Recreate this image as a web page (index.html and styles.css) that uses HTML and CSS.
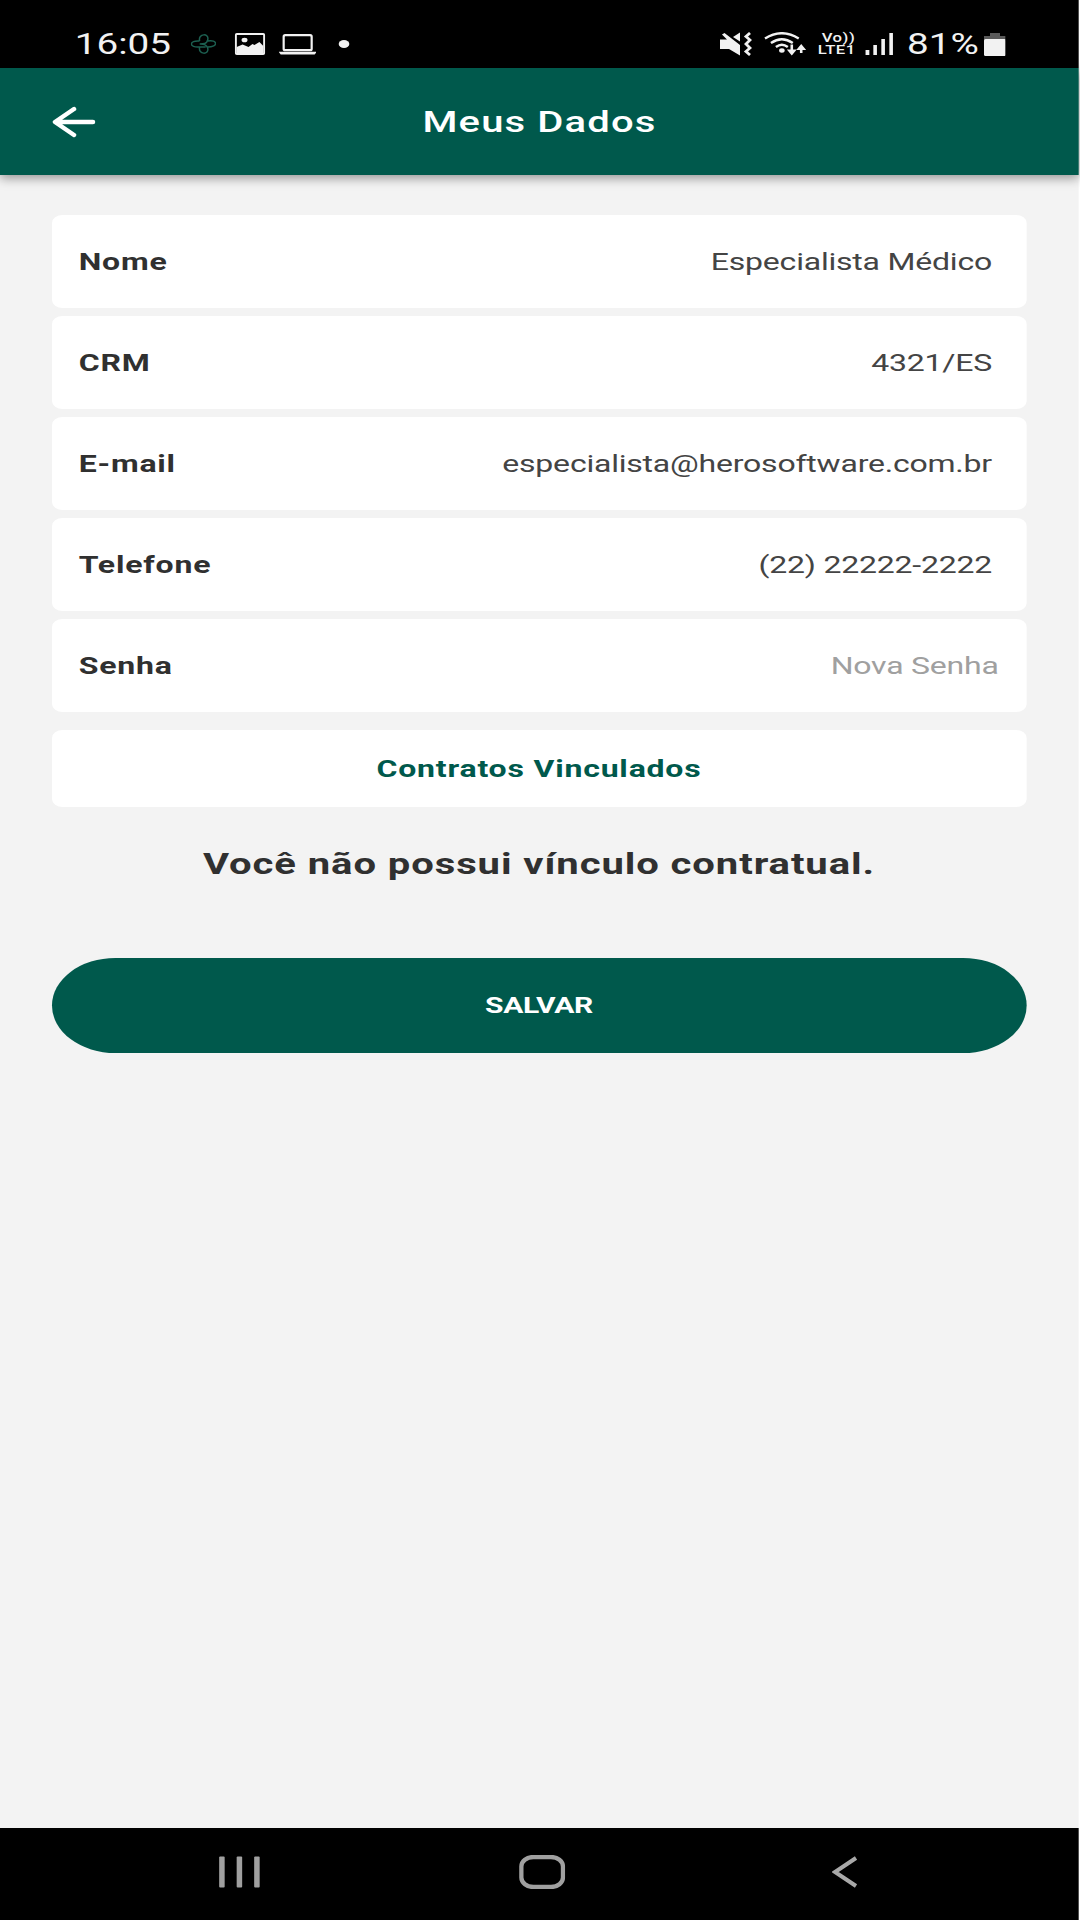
FILE: index.html
```html
<!DOCTYPE html>
<html lang="pt-BR">
<head>
    <meta charset="UTF-8">
    <meta name="viewport" content="width=device-width, initial-scale=1.0">
    <title>Meus Dados</title>
    <link rel="stylesheet" href="styles.css">
</head>
<body>
    <div class="screen">
        <div class="status-bar">
            <div class="status-left">
                <span class="time">16:05</span>
                <svg class="icon-app" viewBox="0 0 26 20" preserveAspectRatio="none" fill="none" stroke="#1c5f50" stroke-width="1.5">
                    <path d="M9 7C7 -1 19 -1 17 6C16 10 13 10 9 10M17 7C27 5 28 13 17 13M9 7C-2 6 -2 14 9 13H15M9 13C7 21 19 21 17 14C16 11 13 10 10 10"/>
                </svg>
                <svg class="icon-picture" viewBox="0 0 31 22" preserveAspectRatio="none">
                    <rect x="1.2" y="1" width="28.6" height="20" rx="1" fill="none" stroke="#f2f2f2" stroke-width="2"/>
                    <path d="M2 14L8 11.5L14 14L18 11L20 12L25 9L29 13V21H2Z" fill="#f2f2f2"/>
                    <ellipse cx="10" cy="7" rx="3" ry="2.3" fill="#f2f2f2"/>
                </svg>
                <svg class="icon-laptop" viewBox="0 0 38 21" preserveAspectRatio="none">
                    <rect x="5" y="1.2" width="28" height="15" rx="1.5" fill="none" stroke="#f2f2f2" stroke-width="2.2"/>
                    <path d="M0 17.8H38L36 20.6H2Z" fill="#f2f2f2"/>
                </svg>
                <span class="dot"></span>
            </div>
            <div class="status-right">
                <svg class="icon-mute" viewBox="0 0 32 24" preserveAspectRatio="none" fill="#f2f2f2">
                    <path d="M0 7.5H7L2 2.500L4.500 1L20 13V23.500L9 17H0Z"/>
                    <path d="M13 5L20 0.5V9.5Z"/>
                    <path d="M30 1L26 4.5L30 8L26 12L30 16L26 19.5L30 23" fill="none" stroke="#f2f2f2" stroke-width="2.8"/>
                </svg>
                <svg class="icon-wifi" viewBox="0 0 43 24" preserveAspectRatio="none" fill="none" stroke="#f2f2f2" stroke-width="2.5">
                    <path d="M1 6.5Q18 -4 35 6.5"/>
                    <path d="M7 11Q18 3.5 29 11"/>
                    <path d="M12 15Q18 10.5 24 15"/>
                    <ellipse cx="18" cy="18.5" rx="2.8" ry="2.2" fill="#f2f2f2" stroke="none"/>
                    <path d="M28 12.500V20M37.500 21V16" stroke-width="2.600"/>
                    <path d="M23 17.500H33L28 23.500ZM32.500 18H42.500L37.500 12Z" fill="#f2f2f2" stroke="none"/>
                </svg>
                <span class="volte"><span>Vo))</span><span>LTE1</span></span>
                <svg class="icon-signal" viewBox="0 0 28 22" preserveAspectRatio="none" fill="#f2f2f2">
                    <rect x="0" y="17" width="4" height="5"/>
                    <rect x="8" y="12" width="3.600" height="10"/>
                    <rect x="16" y="6" width="3.600" height="16"/>
                    <rect x="24" y="0" width="3.600" height="22"/>
                </svg>
                <span class="battery-text">81%</span>
                <svg class="icon-battery" viewBox="0 0 22 23" preserveAspectRatio="none">
                    <path d="M6 0H16V3H22V7H0V3H6Z" fill="#5a5a5a"/>
                    <rect x="0" y="6" width="22" height="17" rx="1.500" fill="#f2f2f2"/>
                </svg>
            </div>
        </div>

        <header class="app-bar">
            <svg class="back" viewBox="0 0 44 32" preserveAspectRatio="none" fill="none" stroke="#fff" stroke-width="4.500" stroke-linecap="round" stroke-linejoin="round">
                <path d="M22 3L3 16L22 29M4 16H41"/>
            </svg>
            <h1>Meus Dados</h1>
        </header>

        <main class="content">
            <div class="fields">
                <div class="field">
                    <span class="label">Nome</span>
                    <span class="value">Especialista Médico</span>
                </div>
                <div class="field">
                    <span class="label">CRM</span>
                    <span class="value">4321/ES</span>
                </div>
                <div class="field">
                    <span class="label">E-mail</span>
                    <span class="value">especialista@herosoftware.com.br</span>
                </div>
                <div class="field">
                    <span class="label">Telefone</span>
                    <span class="value">(22) 22222-2222</span>
                </div>
                <div class="field field-password">
                    <span class="label">Senha</span>
                    <span class="value">Nova Senha</span>
                </div>
            </div>

            <div class="contracts">Contratos Vinculados</div>
            <p class="message">Você não possui vínculo contratual.</p>
            <button class="save" type="button">SALVAR</button>
        </main>

        <nav class="nav-bar">
            <svg class="nav-recent" viewBox="0 0 42 32" preserveAspectRatio="none" fill="#a0a0a0">
                <rect x="0.500" y="0.500" width="5.500" height="31" rx="1"/>
                <rect x="18" y="0.500" width="5.500" height="31" rx="1"/>
                <rect x="35.500" y="0.500" width="5.500" height="31" rx="1"/>
            </svg>
            <svg class="nav-home" viewBox="0 0 47 34" preserveAspectRatio="none">
                <rect x="2.700" y="2" width="41.600" height="30" rx="12" ry="9.500" fill="none" stroke="#a0a0a0" stroke-width="4.300"/>
            </svg>
            <svg class="nav-back" viewBox="0 0 26 32" preserveAspectRatio="none" fill="none" stroke="#a8a8a8" stroke-width="4">
                <path d="M24 2L3 16L24 30"/>
            </svg>
        </nav>
    </div>
</body>
</html>
```

FILE: styles.css
```css
* {
    box-sizing: border-box;
}
body {
    margin: 0;
    background-color: #fff;
    font-family: Roboto, sans-serif;
    overflow: hidden;
}
/* wide pixels: the screen is laid out at 3/4 width and stretched */
.screen {
    display: flex;
    flex-direction: column;
    width: 809.25px;
    height: 1920px;
    background-color: #f3f3f3;
    color: #303030;
    transform: scaleX(1.33333);
    transform-origin: 0 0;
}
svg {
    display: block;
    flex: none;
}
.status-bar {
    display: flex;
    justify-content: space-between;
    height: 68px;
    padding: 20px 55px 0 56px;
    background-color: #000;
    color: #f2f2f2;
}
.status-left, .status-right {
    display: flex;
    align-items: center;
    height: 48px;
}
.time {
    width: 86.5px;
    font-size: 29px;
    line-height: 50px;
}
.icon-app {
    width: 19.5px;
    height: 20px;
    margin-right: 13.5px;
}
.icon-picture {
    width: 23px;
    height: 22px;
    margin-right: 10px;
}
.icon-laptop {
    width: 28.5px;
    height: 21px;
    margin-right: 16.5px;
}
.dot {
    width: 8px;
    height: 8px;
    border-radius: 50%;
    background-color: #f2f2f2;
}
.icon-mute {
    width: 24px;
    height: 24px;
    margin-right: 9px;
}
.icon-wifi {
    width: 32px;
    height: 24px;
    margin-right: 8px;
}
.volte {
    display: flex;
    flex-direction: column;
    width: 35.5px;
    font-size: 12.5px;
    font-weight: 500;
    line-height: 12.5px;
}
.volte span {
    letter-spacing: 0.4px;
}
.volte span:first-child {
    padding-left: 3px;
}
.icon-signal {
    width: 21px;
    height: 22px;
    margin-right: 10.5px;
}
.battery-text {
    width: 57.5px;
    font-size: 29px;
    line-height: 50px;
}
.icon-battery {
    width: 16.5px;
    height: 23px;
}
.app-bar {
    display: grid;
    grid-template-columns: 60px 1fr 60px;
    align-items: center;
    height: 107px;
    padding: 0 38.5px;
    background-color: #00594c;
    color: #fff;
    box-shadow: 0 3px 9px rgba(0, 0, 0, 0.4);
}
.back {
    width: 33px;
    height: 32px;
}
h1 {
    margin: 0;
    font-size: 30px;
    font-weight: 500;
    letter-spacing: 0.85px;
    text-align: center;
}
.content {
    flex: 1;
    padding: 40px 39.25px 0 38.5px;
}
.fields {
    display: flex;
    flex-direction: column;
    gap: 8.5px;
}
.field {
    display: flex;
    align-items: center;
    justify-content: space-between;
    height: 92.5px;
    padding: 2px 26px 0 20.5px;
    border-radius: 8px;
    background-color: #fff;
    font-size: 24px;
}
.label {
    font-weight: 700;
    letter-spacing: 0.6px;
}
.value {
    color: #444;
    letter-spacing: -0.16px;
}
.field-password {
    padding-right: 21px;
}
.field-password .value {
    color: #a0a0a0;
}
.contracts {
    height: 77px;
    margin-top: 18.5px;
    border-radius: 8px;
    background-color: #fff;
    color: #00594c;
    font-size: 24px;
    font-weight: 700;
    letter-spacing: 0.6px;
    line-height: 79px;
    text-align: center;
}
.message {
    height: 40px;
    margin: 36px 0 74.5px;
    font-size: 30px;
    font-weight: 700;
    letter-spacing: 0.69px;
    line-height: 41px;
    text-align: center;
}
.save {
    display: block;
    width: 100%;
    height: 95.5px;
    padding: 0;
    border: none;
    border-radius: 48px;
    background-color: #00594c;
    color: #fff;
    font-family: inherit;
    font-size: 22.5px;
    font-weight: 700;
    letter-spacing: -0.25px;
}
.nav-bar {
    display: flex;
    align-items: center;
    height: 92px;
    padding: 0 0 4px 164px;
    background-color: #000;
}
.nav-recent {
    width: 31.5px;
    height: 32px;
    margin-right: 193.5px;
}
.nav-home {
    width: 35.25px;
    height: 34px;
    margin-right: 200px;
}
.nav-back {
    width: 19.5px;
    height: 32px;
}
```
